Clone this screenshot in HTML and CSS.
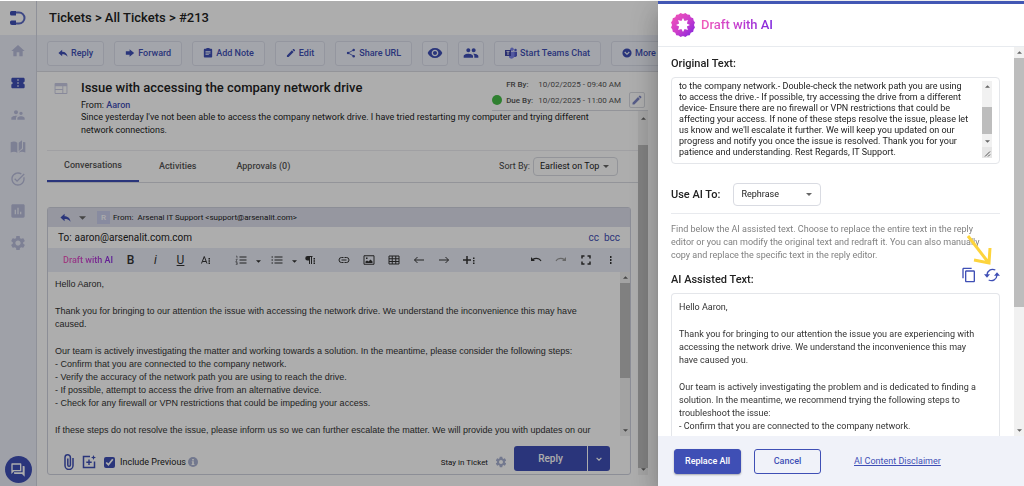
FILE: index.html
```html
<!DOCTYPE html>
<html lang="en">
<head>
<meta charset="utf-8">
<title>Tickets &gt; All Tickets &gt; #213</title>
<link rel="stylesheet" href="styles.css">
</head>
<body>
<svg class="sprite" aria-hidden="true">
  <defs>
    <linearGradient id="ai-gradient" x1="0" y1="0" x2="1" y2="1"><stop offset="0" stop-color="#f556b4"/><stop offset=".5" stop-color="#cf3fcb"/><stop offset="1" stop-color="#7a22e0"/></linearGradient>
    <path id="petal" d="M4.200 0 6.600 2.900 10 4.300 12 2.300 11.500 0 12-2.300 10-4.300 6.600-2.900z"/>
    <clipPath id="ai-star">
      <use href="#petal" transform="rotate(22.500)"/><use href="#petal" transform="rotate(67.500)"/><use href="#petal" transform="rotate(112.500)"/><use href="#petal" transform="rotate(157.500)"/><use href="#petal" transform="rotate(202.500)"/><use href="#petal" transform="rotate(247.500)"/><use href="#petal" transform="rotate(292.500)"/><use href="#petal" transform="rotate(337.500)"/>
    </clipPath>
    <symbol id="gear" viewBox="0 0 24 24"><path d="M19.14 12.94c.04-.3.06-.61.06-.94 0-.32-.02-.64-.07-.94l2.03-1.58c.18-.14.23-.41.12-.61l-1.92-3.32c-.12-.22-.37-.29-.59-.22l-2.39.96c-.5-.38-1.03-.7-1.62-.94l-.36-2.54c-.04-.24-.24-.41-.48-.41h-3.84c-.24 0-.43.17-.47.41l-.36 2.54c-.59.24-1.13.57-1.62.94l-2.39-.96c-.22-.08-.47 0-.59.22L2.74 8.87c-.12.21-.08.47.12.61l2.03 1.58c-.05.3-.09.63-.09.94s.02.64.07.94l-2.03 1.58c-.18.14-.23.41-.12.61l1.92 3.32c.12.22.37.29.59.22l2.39-.96c.5.38 1.03.7 1.62.94l.36 2.54c.05.24.24.41.48.41h3.84c.24 0 .44-.17.47-.41l.36-2.54c.59-.24 1.13-.56 1.62-.94l2.39.96c.22.08.47 0 .59-.22l1.92-3.32c.12-.22.07-.47-.12-.61l-2.01-1.58zM12 15.6c-1.98 0-3.6-1.62-3.6-3.6s1.62-3.6 3.6-3.6 3.6 1.62 3.6 3.6-1.62 3.6-3.6 3.6z"/></symbol>
    <symbol id="pencil" viewBox="0 0 24 24"><path d="M3 17.25V21h3.75L17.81 9.94l-3.75-3.75L3 17.25zM20.71 7.04c.39-.39.39-1.02 0-1.41l-2.34-2.34c-.39-.39-1.02-.39-1.41 0l-1.83 1.83 3.75 3.75 1.83-1.83z"/></symbol>
    <symbol id="reply" viewBox="0 0 24 24"><path d="M10 9V4l-9 8 9 8v-5c5 0 9 1 13 6-1-7-5-12-13-12z"/></symbol>
    <symbol id="caret" viewBox="0 0 10 5"><path d="M0 0h10L5 5z"/></symbol>
    <symbol id="caret-up" viewBox="0 0 10 5"><path d="M0 5h10L5 0z"/></symbol>
    <symbol id="undo" viewBox="0 0 24 24"><path d="M2 6v8h8l-2.700-2.700c1.600-.9 3.200-1.300 5.200-1.300 4 0 6.500 1.500 8.500 4.600l2-1.200C20.800 9.500 17 7.500 12.500 7.500c-2.900 0-5.400.7-7.300 1.900z"/></symbol>
  </defs>
</svg>

<div class="app">
  <nav class="sidebar" aria-label="Main">
    <a class="logo" href="#" aria-label="Home page"><svg viewBox="0 0 16 16"><path class="logo-arc" d="M4 2.500h5a5 5 0 0 1 0 11H4"/><path d="M1.500 1H6v4.500H1.500A1.500 1.500 0 0 1 0 4V2.500A1.500 1.500 0 0 1 1.500 1zM1.500 10.500H6V15H2a2 2 0 0 1-2-2v-1a1.500 1.500 0 0 1 1.500-1.500z"/></svg></a>
    <a href="#" aria-label="Dashboard"><svg viewBox="0 0 24 24"><path d="M10 20v-6h4v6h5v-8h3L12 3 2 12h3v8z"/></svg></a>
    <a class="active" href="#" aria-label="Tickets"><svg viewBox="0 0 24 24"><path d="M22 10V6c0-1.110-.9-2-2-2H4c-1.100 0-1.990.89-1.990 2v4c1.100 0 1.990.9 1.990 2s-.89 2-2 2v4c0 1.100.9 2 2 2h16c1.100 0 2-.9 2-2v-4c-1.100 0-2-.9-2-2s.9-2 2-2zm-9 7.500h-2v-2h2v2zm0-4.500h-2v-2h2v2zm0-4.500h-2v-2h2v2z"/></svg></a>
    <a href="#" aria-label="Contacts"><svg viewBox="0 0 24 24"><path d="M16.500 12c1.380 0 2.490-1.120 2.490-2.500S17.880 7 16.500 7C15.120 7 14 8.120 14 9.500s1.120 2.500 2.500 2.500zM9 11c1.660 0 2.990-1.340 2.990-3S10.660 5 9 5C7.340 5 6 6.340 6 8s1.340 3 3 3zm7.500 3c-1.830 0-5.500.92-5.500 2.750V19h11v-2.250c0-1.830-3.670-2.750-5.500-2.750zM9 13c-2.330 0-7 1.170-7 3.500V19h7v-2.250c0-.85.33-2.340 2.370-3.470C10.500 13.100 9.660 13 9 13z"/></svg></a>
    <a href="#" aria-label="Knowledge base"><svg viewBox="0 0 24 24"><path d="M1 5c3.500-1.500 7-1.500 10 .5v15c-3-1.700-6.500-1.700-10-.3zM13 5.500 18 2v12l-5 4.500zM19.500 4.500 23 5v15.200c-3.500-1.400-7-1.400-10 .3 2-2.500 4-4 6.500-5.500z"/></svg></a>
    <a href="#" aria-label="Tasks"><svg viewBox="0 0 24 24"><path d="M22 5.180 10.590 16.600l-4.240-4.240 1.410-1.410 2.830 2.830 10-10L22 5.180zm-2.210 5.040c.13.57.21 1.170.21 1.780 0 4.420-3.580 8-8 8s-8-3.580-8-8 3.580-8 8-8c1.580 0 3.040.46 4.280 1.250l1.440-1.440C16.100 2.670 14.130 2 12 2 6.480 2 2 6.480 2 12s4.480 10 10 10 10-4.480 10-10c0-1.190-.22-2.330-.6-3.390l-1.610 1.610z"/></svg></a>
    <a href="#" aria-label="Reports"><svg viewBox="0 0 24 24"><path d="M20 2H4c-1.100 0-2 .9-2 2v16c0 1.100.9 2 2 2h16c1.100 0 2-.9 2-2V4c0-1.100-.9-2-2-2zM9 17H7v-7h2v7zm4 0h-2V7h2v10zm4 0h-2v-4h2v4z"/></svg></a>
    <a href="#" aria-label="Settings"><svg viewBox="1 1 22 22"><use href="#gear" width="24" height="24"/></svg></a>
    <button class="chat" aria-label="Chat"><svg viewBox="0 0 24 24" width="16" height="16"><path fill-rule="evenodd" d="M3 2h13c.6 0 1 .4 1 1v10c0 .6-.4 1-1 1H6l-4 4V3c0-.6.4-1 1-1zm1 2v8.500L4.500 12H15V4zM19 6h2c.6 0 1 .4 1 1v15l-4-4H7c-.6 0-1-.4-1-1v-1.500h13z"/></svg></button>
  </nav>

  <main class="main">
    <header class="page-head"><h1>Tickets &gt; All Tickets &gt; #213</h1></header>

    <div class="actions">
      <button><svg viewBox="0 0 24 24"><use href="#reply"/></svg>Reply</button>
      <button><svg viewBox="0 0 24 24"><path d="M2 8h9V3l11 9-11 9v-5H2z"/></svg>Forward</button>
      <button><svg viewBox="0 0 24 24"><path fill-rule="evenodd" d="M4 2h4a4 3 0 0 1 8 0h4a2 2 0 0 1 2 2v17a2 2 0 0 1-2 2H4a2 2 0 0 1-2-2V4a2 2 0 0 1 2-2zm2 5v2h12V7zm0 4v2h12v-2zm0 4v2h8v-2z"/></svg>Add Note</button>
      <button><svg viewBox="1 1 22 22"><use href="#pencil" width="24" height="24"/></svg>Edit</button>
      <button><svg viewBox="0 0 24 24"><path class="line" d="M18 5 5 12l13 7"/><circle cx="18.500" cy="4.500" r="3"/><circle cx="5" cy="12" r="3"/><circle cx="18.500" cy="19.500" r="3"/></svg>Share URL</button>
      <button class="icon-only" aria-label="Watch"><svg viewBox="0 0 24 24"><path d="M12 4.500C7 4.500 2.730 7.610 1 12c1.730 4.390 6 7.500 11 7.500s9.270-3.110 11-7.500c-1.730-4.390-6-7.500-11-7.500zM12 17c-2.760 0-5-2.240-5-5s2.240-5 5-5 5 2.240 5 5-2.240 5-5 5zm0-8c-1.660 0-3 1.340-3 3s1.340 3 3 3 3-1.340 3-3-1.340-3-3-3z"/></svg></button>
      <button class="icon-only" aria-label="Followers"><svg viewBox="0 0 24 24"><path d="M16 11c1.660 0 2.990-1.340 2.990-3S17.660 5 16 5c-1.660 0-3 1.340-3 3s1.340 3 3 3zm-8 0c1.660 0 2.990-1.340 2.990-3S9.660 5 8 5C6.340 5 5 6.340 5 8s1.340 3 3 3zm0 2c-2.330 0-7 1.170-7 3.500V19h14v-2.500c0-2.330-4.670-3.500-7-3.500zm8 0c-.29 0-.62.02-.97.05 1.160.84 1.970 1.970 1.970 3.450V19h6v-2.500c0-2.330-4.670-3.500-7-3.500z"/></svg></button>
      <button class="teams"><svg viewBox="0 0 24 24"><circle cx="14" cy="4.500" r="3.500" fill="#7b83eb"/><circle cx="21" cy="6" r="2.500" fill="#5059c9"/><path fill="#5059c9" d="M17 9.500h7v7a4 4 0 0 1-6 3z"/><path fill="#7b83eb" d="M8 9.500h11v8a6 6 0 0 1-11 3z"/><path fill="#4048a8" d="M0 6h12v12H0z"/><path fill="#fff" d="M3 8.500h6v1.700H6.900V16H5.100v-5.800H3z"/></svg>Start Teams Chat</button>
      <button><svg viewBox="0 0 24 24"><path fill-rule="evenodd" d="M12 1a11 11 0 1 0 0 22 11 11 0 0 0 0-22zM7.500 8.500 12 13l4.500-4.500L18.500 10.500 12 17l-6.500-6.500z"/></svg>More</button>
    </div>

    <section class="ticket">
      <header class="ticket-head">
        <svg class="source" viewBox="0 0 14 12"><path fill-rule="evenodd" d="M1 0h12a1 1 0 0 1 1 1v10a1 1 0 0 1-1 1H1a1 1 0 0 1-1-1V1a1 1 0 0 1 1-1zm0 3.500v3h7.500v-3zm0 4V11h7.500V7.500zm8.500-4V11H13V3.500z"/></svg>
        <div class="subject">
          <h2>Issue with accessing the company network drive</h2>
          <p>From: <a href="#">Aaron</a></p>
        </div>
        <div class="due">
          <dl>
            <div><dt>FR By:</dt><dd>10/02/2025 - 09:40 AM</dd></div>
            <div class="due-row"><dt>Due By:</dt><dd>10/02/2025 - 11:00 AM</dd></div>
          </dl>
          <button aria-label="Edit due date"><svg viewBox="0 0 24 24"><use href="#pencil"/></svg></button>
        </div>
      </header>

      <div class="ticket-body">
        <div class="column">
          <p class="message">Since yesterday I've not been able to access the company network drive. I have tried restarting my computer and trying different network connections.</p>
          <div class="tabs">
            <a class="current" href="#">Conversations</a>
            <a href="#">Activities</a>
            <a href="#">Approvals (0)</a>
            <label for="sort">Sort By:</label>
            <span class="select"><select id="sort"><option>Earliest on Top</option></select><svg><use href="#caret"/></svg></span>
          </div>

          <div class="editor">
            <div class="sender">
              <svg class="sender-reply" viewBox="0 0 24 24"><use href="#reply"/></svg>
              <svg class="caret"><use href="#caret"/></svg>
              <span class="avatar">R</span>
              <span>From:&nbsp; Arsenal IT Support &lt;support@arsenalit.com&gt;</span>
            </div>
            <div class="recipient">
              <label for="to">To:</label><input id="to" value="aaron@arsenalit.com.com">
              <a href="#">cc</a><a href="#">bcc</a>
            </div>
            <div class="format">
              <button class="draft gradient-text">Draft with AI</button>
              <button aria-label="Bold" class="glyph"><b>B</b></button>
              <button aria-label="Italic" class="glyph"><i>i</i></button>
              <button aria-label="Underline" class="glyph"><u>U</u></button>
              <button aria-label="More text"><svg viewBox="0 0 24 24"><path class="line" d="M3 19 8.500 5 14 19M5 15h7"/><path d="M17 8h3v3h-3zm0 4.500h3v3h-3zM17 17h3v3h-3z"/></svg></button>
              <button class="list first" aria-label="Ordered list"><svg viewBox="0 0 24 24"><path class="line" d="M9 6h14M9 12h14M9 18h14"/><path class="thin" d="M2 4.500 4 4v5M1.500 11h3l-3 4h3M1.500 17h3v4h-3M2.500 19h2"/></svg></button>
              <button class="mini" aria-label="Ordered list styles"><svg><use href="#caret"/></svg></button>
              <button class="list" aria-label="Bulleted list"><svg viewBox="0 0 24 24"><path class="line" d="M7 6h16M7 12h16M7 18h16M1 6h3M1 12h3M1 18h3"/></svg></button>
              <button class="mini" aria-label="Bulleted list styles"><svg><use href="#caret"/></svg></button>
              <button class="para" aria-label="Paragraph"><svg viewBox="0 0 24 24"><path d="M7 4h10v2h-1v14h-2V6h-2v14h-2v-7H7a4.500 4.500 0 0 1 0-9zM19 8h3v3h-3zm0 4.500h3v3h-3zM19 17h3v3h-3z"/></svg></button>
              <button aria-label="Link"><svg viewBox="0 0 24 24"><path class="line" d="M11 7H7a5 5 0 0 0 0 10h4M13 7h4a5 5 0 0 1 0 10h-4M7 12h10"/></svg></button>
              <button aria-label="Image"><svg viewBox="0 0 24 24"><path class="line" d="M2 3.500h20v17H2z"/><path d="M5 18v-3l3-2 3 2 4-4 4 4v3zM6 7h3v3H6z"/></svg></button>
              <button aria-label="Table"><svg viewBox="0 0 24 24"><path class="line" d="M2 4h20v16H2zM2 9.500h20M2 15h20M8.500 4v16M15.500 4v16"/></svg></button>
              <button aria-label="Outdent"><svg viewBox="0 0 24 24"><path class="line" d="M22 12H3M9 6l-6 6 6 6"/></svg></button>
              <button aria-label="Indent"><svg viewBox="0 0 24 24"><path class="line" d="M2 12h19M15 6l6 6-6 6"/></svg></button>
              <button aria-label="More rich"><svg viewBox="0 0 24 24"><path class="bold-line" d="M8 4v16M0 12h16"/><path d="M20 7h3v3h-3zm0 5h3v3h-3zM20 17h3v3h-3z"/></svg></button>
              <span class="spacer"></span>
              <button aria-label="Undo"><svg viewBox="0 0 24 24"><use href="#undo"/></svg></button>
              <button aria-label="Redo" class="redo" disabled><svg viewBox="0 0 24 24"><g transform="translate(24 0) scale(-1 1)"><use href="#undo"/></g></svg></button>
              <button aria-label="Fullscreen"><svg viewBox="0 0 24 24"><path class="bold-line" d="M4 9V4h5M15 4h5v5M20 15v5h-5M9 20H4v-5"/></svg></button>
              <button aria-label="More options"><svg viewBox="0 0 24 24"><path d="M10 4h3v4h-3zm0 6h3v4h-3zM10 16h3v4h-3z"/></svg></button>
            </div>
            <div class="compose">
              <div class="letter">
                <p>Hello Aaron,</p>
                <p>Thank you for bringing to our attention the issue with accessing the network drive. We understand the inconvenience this may have<br>caused.</p>
                <p>Our team is actively investigating the matter and working towards a solution. In the meantime, please consider the following steps:<br>- Confirm that you are connected to the company network.<br>- Verify the accuracy of the network path you are using to reach the drive.<br>- If possible, attempt to access the drive from an alternative device.<br>- Check for any firewall or VPN restrictions that could be impeding your access.</p>
                <p>If these steps do not resolve the issue, please inform us so we can further escalate the matter. We will provide you with updates on our</p>
              </div>
              <div class="scrollbar compose-bar"><svg><use href="#caret-up"/></svg><i></i><svg><use href="#caret"/></svg></div>
            </div>
            <div class="compose-foot">
              <button class="tool clip" aria-label="Attach file"><svg viewBox="0 0 10 16"><path class="outline" d="M9 4v7.500a4 4 0 0 1-8 0V3.500a2.700 2.700 0 0 1 5.400 0V11a1.300 1.300 0 0 1-2.600 0V4.500"/></svg></button>
              <button class="tool" aria-label="Insert template"><svg viewBox="0 0 14 14"><path class="outline" d="M8 1.500H1.500v11h11V6.500"/><path d="M6.300 4.500h1.400v2h2v1.400h-2v2H6.300v-2h-2V6.500h2zM11.500 0l.7 1.800 1.800.7-1.800.7-.7 1.800-.7-1.800L9 2.500l1.800-.7z"/></svg></button>
              <label class="check"><input type="checkbox" checked>Include Previous</label>
              <svg class="info" viewBox="0 0 12 12"><circle cx="6" cy="6" r="6"/><path d="M5 2.500h2v1.700H5zM4.500 5H7v3.500h.7v1H4.300v-1H5V6h-.5z" fill="#fff"/></svg>
              <span class="spacer"></span>
              <span class="small">Stay in Ticket</span>
              <button class="tool stay" aria-label="Reply settings"><svg viewBox="1 1 22 22"><use href="#gear" width="24" height="24"/></svg></button>
              <div class="split"><button>Reply</button><button aria-label="Reply options"><svg viewBox="0 0 10 6"><path d="M1 1l4 4 4-4"/></svg></button></div>
            </div>
          </div>
        </div>
        <div class="scrollbar ticket-bar"><svg><use href="#caret-up"/></svg><i></i><svg><use href="#caret"/></svg></div>
      </div>
    </section>
  </main>
</div>

<div class="backdrop"></div>

<aside class="drawer" aria-labelledby="drawer-title">
  <header class="drawer-head">
    <svg viewBox="-12 -12 24 24" width="24" height="24"><g clip-path="url(#ai-star)"><path fill="url(#ai-gradient)" d="M-12-12h24v24h-24z"/></g></svg>
    <h2 id="drawer-title" class="gradient-text">Draft with AI</h2>
  </header>
  <div class="drawer-body">
    <div class="form">
      <label class="field" for="original">Original Text:</label>
      <div class="original">
        <textarea id="original" spellcheck="false">some steps to try: - Check that your laptop is properly joined
to the company network.- Double-check the network path you are using
to access the drive.- If possible, try accessing the drive from a different
device- Ensure there are no firewall or VPN restrictions that could be
affecting your access. If none of these steps resolve the issue, please let
us know and we'll escalate it further. We will keep you updated on our
progress and notify you once the issue is resolved. Thank you for your
patience and understanding. Rest Regards, IT Support.</textarea>
        <div class="original-side">
          <div class="scrollbar original-bar"><svg><use href="#caret-up"/></svg><i></i><svg><use href="#caret"/></svg></div>
          <svg class="grip" viewBox="0 0 10 10"><path d="M3 9l5-5M6 9l2-2"/></svg>
        </div>
      </div>
      <div class="use">
        <label class="field" for="mode">Use AI To:</label>
        <span class="select wide"><select id="mode"><option>Rephrase</option></select><svg><use href="#caret"/></svg></span>
      </div>
      <p class="hint">Find below the AI assisted text. Choose to replace the entire text in the reply<br>editor or you can modify the original text and redraft it. You can also manually<br>copy and replace the specific text in the reply editor.</p>
      <div class="result-head">
        <h3 class="field">AI Assisted Text:</h3>
        <button aria-label="Copy"><svg viewBox="0 0 24 24"><path d="M16 1H4c-1.100 0-2 .9-2 2v14h2V3h12V1zm3 4H8c-1.100 0-2 .9-2 2v14c0 1.100.9 2 2 2h11c1.100 0 2-.9 2-2V7c0-1.100-.9-2-2-2zm0 16H8V7h11v14z"/></svg></button>
        <button aria-label="Redraft"><svg viewBox="0 0 24 24"><path class="line" d="M17 4.500C11 1.800 5 5 4.500 12M7 19.500C13 22.200 19 19 19.500 12"/><path d="M0 11h9l-4.500 5zM15 13h9l-4.500-5z"/></svg></button>
        <svg class="pointer" viewBox="0 0 28 34"><path d="M3 3l20 26M9 27l15 3 1-15"/></svg>
      </div>
      <div class="result letter">
        <p>Hello Aaron,</p>
        <p>Thank you for bringing to our attention the issue you are experiencing with<br>accessing the network drive. We understand the inconvenience this may<br>have caused you.</p>
        <p>Our team is actively investigating the problem and is dedicated to finding a<br>solution. In the meantime, we recommend trying the following steps to<br>troubleshoot the issue:<br>- Confirm that you are connected to the company network.</p>
      </div>
    </div>
    <div class="scrollbar drawer-bar"><svg><use href="#caret-up"/></svg><i></i><svg><use href="#caret"/></svg></div>
  </div>
  <footer class="drawer-foot">
    <button class="primary">Replace All</button>
    <button class="secondary">Cancel</button>
    <a href="#">AI Content Disclaimer</a>
  </footer>
</aside>
<script src="app.js"></script>
</body>
</html>
```

FILE: styles.css
```css
:root {
  --primary: #3f4fb5;
  --muted: #b9bddb;
  --line: #d9dbe2;
  --ink: #222;
}

* { box-sizing: border-box; }

body {
  margin: 0;
  font: 9px/13px Roboto, "Liberation Sans", sans-serif;
  color: var(--ink);
  background: #fff;
}

h1, h2, h3, p, dl, dd { margin: 0; font-weight: 500; }
p, dl, dd { font-weight: 400; }
a { color: var(--primary); text-decoration: none; }
button { font: inherit; color: inherit; background: none; border: 0; padding: 0; margin: 0; }
input, select, textarea { font: inherit; color: inherit; background: none; border: 0; padding: 0; margin: 0; outline: 0; }
svg { display: block; fill: currentColor; flex: none; }
.sprite { position: absolute; width: 0; height: 0; }
.spacer { flex: 1; }
.small { font-size: 8px; }
.line, .bold-line, .thin { fill: none; stroke: currentColor; stroke-width: 2; }
.bold-line { stroke-width: 3; }
.thin { stroke-width: 1; }

.gradient-text {
  background: linear-gradient(90deg, #f25bb8, #c63fcf 50%, #7e26dd);
  -webkit-background-clip: text;
  background-clip: text;
  color: transparent;
}

.app { display: flex; height: 100vh; min-height: 440px; padding-top: 1px; }

/* Sidebar */
.sidebar {
  width: 37px;
  flex: none;
  display: flex;
  flex-direction: column;
  align-items: center;
  background: #ebedf8;
  border-right: 1px solid #d3d6e2;
}
.sidebar a { height: 32px; display: flex; align-items: center; color: var(--muted); }
.sidebar a svg { width: 16px; height: 16px; }
.sidebar .active { color: var(--primary); }
.sidebar .logo { width: 100%; height: 34px; justify-content: center; background: #fff; color: var(--primary); }
.logo-arc { fill: none; stroke: #5c6bc4; stroke-width: 2; }
.chat {
  width: 27px;
  height: 27px;
  margin: auto 0 3px;
  display: grid;
  place-items: center;
  border-radius: 50%;
  background: var(--primary);
  color: #fff;
}

/* Main column */
.main { flex: 1; min-width: 0; padding-right: 366px; display: flex; flex-direction: column; }
.page-head { height: 34px; padding: 0 12px; display: flex; align-items: center; }
.page-head h1 { font-size: 13px; line-height: 18px; }

.actions {
  height: 37px;
  flex: none;
  display: flex;
  align-items: center;
  gap: 10px;
  padding: 0 10px;
  overflow: hidden;
  background: #eef1fa;
  border-bottom: 1px solid var(--line);
}
.actions button {
  height: 25px;
  flex: none;
  display: flex;
  align-items: center;
  gap: 3px;
  padding: 0 10px;
  border: 1px solid #dadeea;
  border-radius: 3px;
  background: #f1f4fc;
  color: var(--primary);
  font-weight: 500;
}
.actions svg { width: 10px; height: 10px; }
.actions .icon-only { width: 26px; padding: 0; justify-content: center; }
.actions .icon-only svg { width: 16px; height: 16px; }
.actions .teams svg { width: 12px; height: 12px; }

.ticket { flex: 1; min-height: 0; display: flex; flex-direction: column; padding: 0 10px; }
.ticket-head { height: 39px; flex: none; display: flex; }
.source { width: 14px; height: 11px; margin: 11px 13px 0 7px; color: #c9cbe4; }
.subject { flex: 1; min-width: 0; padding-top: 7px; }
.subject h2 { font-size: 13px; line-height: 18px; white-space: nowrap; }
.subject p { padding-top: 2px; }
.subject a { font-weight: 500; }
.due {
  display: flex;
  align-items: flex-end;
  gap: 8px;
  padding: 0 3px 2px 0;
  border-bottom: 1px solid var(--line);
  color: #555;
  font-size: 8px;
}
.due dl > div { display: flex; align-items: center; height: 16px; padding-left: 14px; }
.due dt { width: 32px; font-weight: 500; }
.due .due-row { padding-left: 0; }
.due-row::before { content: ""; width: 10px; height: 10px; margin-right: 4px; border-radius: 50%; background: #46bd48; }
.due button { width: 16px; height: 16px; display: grid; place-items: center; border: 1px solid var(--line); border-radius: 2px; color: #7f88c8; }
.due button svg { width: 12px; height: 12px; }

.ticket-body { flex: 1; min-height: 0; display: flex; }
.column { flex: 1; min-width: 0; display: flex; flex-direction: column; }
.message { height: 39px; flex: none; padding: 0 20px 0 34px; }

.tabs {
  height: 33px;
  flex: none;
  display: flex;
  align-items: center;
  border-top: 1px solid #ececf0;
  border-bottom: 1px solid var(--line);
}
.tabs a { align-self: stretch; display: flex; align-items: center; padding: 0 20px; color: #555; font-weight: 500; }
.tabs .current { padding: 0 17px; border-bottom: 2px solid var(--primary); }
.tabs label { margin-left: auto; color: #444; }
.select { position: relative; display: flex; align-items: center; height: 19px; margin: 0 20px 0 3px; border: 1px solid var(--line); border-radius: 4px; }
.select select { appearance: none; width: 83px; height: 100%; padding: 0 6px; }
.select svg { position: absolute; right: 8px; width: 6px; height: 3px; color: #666; pointer-events: none; }

/* Reply editor */
.editor { flex: 1; min-height: 0; margin: 24px 7px 11px 0; display: flex; flex-direction: column; border: 1px solid #cfd2de; border-radius: 3px; }
.sender { height: 19px; flex: none; display: flex; align-items: center; padding-left: 12px; background: #dddfec; font-size: 8px; }
.sender-reply { width: 11px; height: 11px; color: var(--primary); }
.sender .caret { width: 7px; height: 4px; margin: 0 11px 0 8px; color: #666; }
.avatar { width: 13px; height: 13px; margin-right: 3px; background: #c9cdec; color: #fff; text-align: center; font-weight: 500; }
.recipient { height: 21px; flex: none; display: flex; align-items: center; gap: 3px; padding: 0 10px; font-size: 10px; }
.recipient input { flex: 1; min-width: 0; }
.recipient a + a { margin-left: 2px; }
.format { height: 24px; flex: none; display: flex; align-items: center; padding: 0 7px 0 14px; background: #e9ecf7; color: #333; }
.format button { width: 25px; flex: none; display: grid; place-items: center; }
.format svg { width: 12px; height: 12px; }
.format .draft { width: 52px; margin-right: 4px; font-weight: 500; }
.format .glyph { font-size: 12px; }
.format .glyph b { font-weight: 500; }
.format .first { margin-left: 10px; }
.format .mini { width: 11px; padding-top: 3px; }
.format .mini svg { width: 5px; height: 3px; }
.format .para { width: 20px; margin-right: 11px; }
.format .redo { color: #999; }
.compose { flex: 1; min-height: 0; display: flex; font-family: "Liberation Sans", Arial, sans-serif; }
.letter { display: flex; flex-direction: column; gap: 14px; color: #333; }
.compose .letter { flex: 1; min-width: 0; padding: 6px 0 0 7px; overflow: hidden; }
.compose-foot { height: 38px; flex: none; display: flex; align-items: center; padding: 14px 20px 0 16px; }
.tool { width: 14px; margin-right: 8px; color: var(--primary); }
.tool svg { width: 14px; height: 14px; }
.clip { width: 10px; }
.clip svg { width: 10px; height: 16px; }
.outline { fill: none; stroke: currentColor; stroke-width: 1.5; }
.check { display: flex; align-items: center; gap: 5px; }
.check input { width: 11px; height: 11px; accent-color: var(--primary); }
.info { width: 10px; height: 10px; margin-left: 2px; color: #a9b1d2; }
.compose-foot .stay { width: 12px; margin: 0 7px; color: #a9b1d2; }
.stay svg { width: 12px; height: 12px; }
.split { display: flex; gap: 1px; height: 25px; margin-bottom: 7px; color: #fff; font-size: 10px; font-weight: 500; }
.split button { width: 73px; background: var(--primary); border-radius: 3px 0 0 3px; }
.split button + button { width: 22px; display: grid; place-items: center; border-radius: 0 3px 3px 0; }
.split svg { width: 6px; height: 4px; fill: none; stroke: currentColor; stroke-width: 2; }

/* Scrollbars */
.scrollbar { display: flex; flex-direction: column; align-items: center; flex: none; width: 10px; background: #f1f1f1; color: #666; }
.scrollbar svg { width: 5px; height: 3px; margin: 4px 0; }
.scrollbar i { width: 100%; background: #bdbdbd; }
.scrollbar svg:last-child { margin-top: auto; }
.compose-bar i { height: 58%; }
.ticket-bar { margin-bottom: 11px; padding-top: 2px; }
.ticket-bar i { flex: 1; margin-top: 21px; }

/* Drawer */
.backdrop { position: fixed; inset: 1px 0 0; background: rgba(0, 0, 0, .32); }
.drawer {
  position: fixed;
  top: 1px;
  right: 0;
  bottom: 0;
  width: 366px;
  display: flex;
  flex-direction: column;
  background: #fff;
  border-top: 3px solid #4257b4;
  box-shadow: 0 8px 10px -5px rgba(0, 0, 0, .2), 0 16px 24px 2px rgba(0, 0, 0, .14), 0 6px 30px 5px rgba(0, 0, 0, .12);
}
.drawer-head { height: 43px; flex: none; display: flex; align-items: center; gap: 6px; padding: 0 13px; border-bottom: 1px solid #e8ebef; }
.drawer-head h2 { font-size: 13px; line-height: 18px; }
.drawer-body { flex: 1; min-height: 0; display: flex; }
.form { flex: 1; min-width: 0; display: flex; flex-direction: column; padding: 10px 14px 0 13px; overflow: hidden; }
.field { font-size: 11px; line-height: 13px; font-weight: 500; }
.original { display: flex; height: 87px; flex: none; margin: 7px 0 19px; padding: 3px 7px 5px; border: 1px solid #e4e6ea; border-radius: 4px; }
.original textarea { flex: 1; min-width: 0; line-height: 11px; resize: none; overflow: hidden; white-space: pre; }
.original-side { display: flex; flex-direction: column; width: 10px; background: #e6e6e6; }
.original-bar { flex: 1; }
.original-bar i { height: 27px; margin-top: 15px; }
.grip { width: 10px; height: 11px; fill: none; stroke: #555; }
.use { display: flex; align-items: center; padding-bottom: 7px; border-bottom: 1px solid #e8eaee; }
.wide { height: 23px; margin: 0 0 0 13px; }
.wide select { width: 86px; padding: 0 7px; }
.hint { margin-top: 9px; color: #808080; }
.result-head { position: relative; display: flex; align-items: center; gap: 7px; height: 22px; margin: 2px 0 7px; color: var(--primary); }
.result-head h3 { flex: 1; padding-top: 8px; color: var(--ink); }
.result-head svg { width: 16px; height: 16px; }
.result-head .pointer { position: absolute; right: 7px; bottom: 19px; width: 28px; height: 34px; fill: none; stroke: #fdd43c; stroke-width: 3; }
.result { flex: 1; min-height: 0; padding: 7px; border: 1px solid #e4e6ea; border-bottom: 0; border-radius: 4px 4px 0 0; }
.drawer-bar i { height: 64%; }
.drawer-foot { height: 50px; flex: none; display: flex; align-items: center; padding: 0 16px; background: #f0f2f9; color: var(--primary); }
.drawer-foot button { width: 67px; height: 25px; margin-right: 13px; border: 1px solid var(--primary); border-radius: 3px; font-weight: 500; }
.drawer-foot .primary { background: var(--primary); color: #fff; box-shadow: 0 1px 2px rgba(0, 0, 0, .3); }
.drawer-foot a { margin-left: 20px; text-decoration: underline; }
```

FILE: app.js
```js
// Open the original text at its last lines.
const original = document.getElementById('original');
original.scrollTop = original.scrollHeight;
```
